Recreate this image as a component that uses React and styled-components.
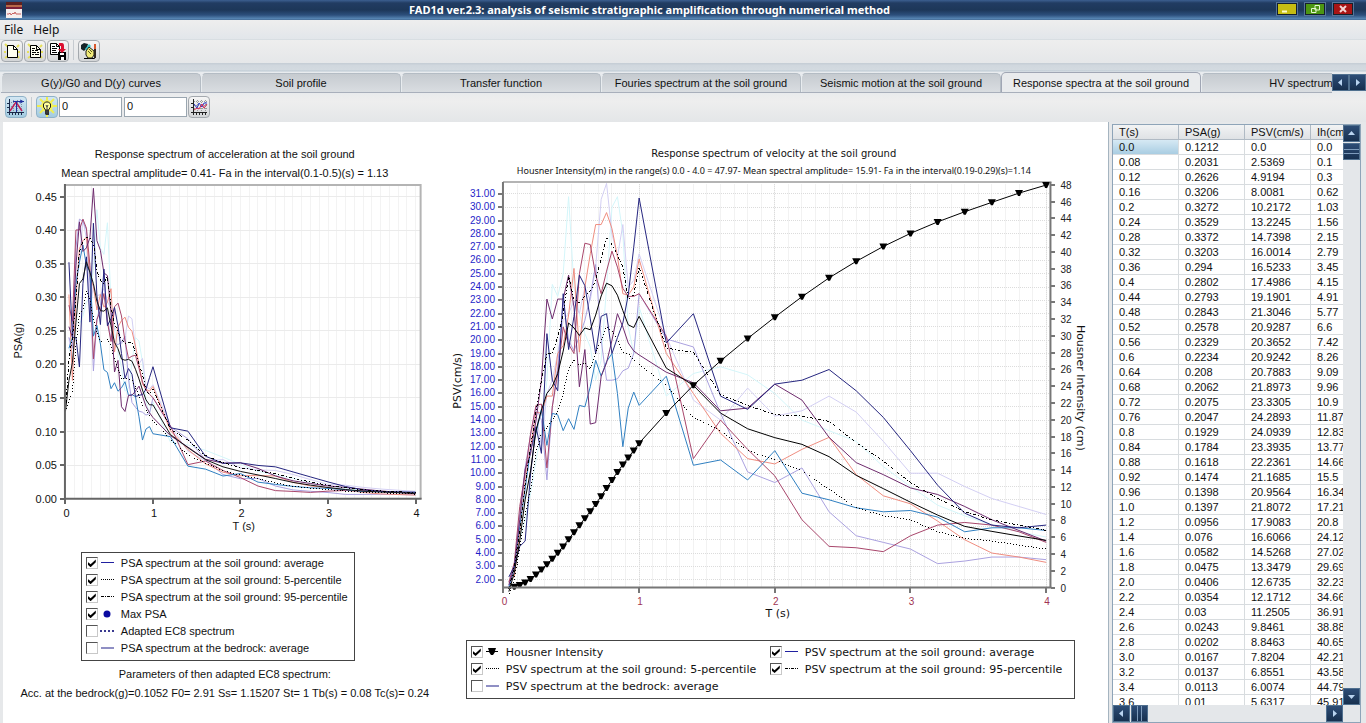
import styled, { createGlobalStyle } from "styled-components";

const sans = `"Liberation Sans", Arial, sans-serif`;
const wide = `"DejaVu Sans", Verdana, sans-serif`;
const humanist = `"Noto Sans", Tahoma, sans-serif`;

// T, PSA, PSV, Ih
const rows = [
  ["0.0", "0.1212", "0.0", "0.0"],
  ["0.08", "0.2031", "2.5369", "0.1"],
  ["0.12", "0.2626", "4.9194", "0.3"],
  ["0.16", "0.3206", "8.0081", "0.62"],
  ["0.2", "0.3272", "10.2172", "1.03"],
  ["0.24", "0.3529", "13.2245", "1.56"],
  ["0.28", "0.3372", "14.7398", "2.15"],
  ["0.32", "0.3203", "16.0014", "2.79"],
  ["0.36", "0.294", "16.5233", "3.45"],
  ["0.4", "0.2802", "17.4986", "4.15"],
  ["0.44", "0.2793", "19.1901", "4.91"],
  ["0.48", "0.2843", "21.3046", "5.77"],
  ["0.52", "0.2578", "20.9287", "6.6"],
  ["0.56", "0.2329", "20.3652", "7.42"],
  ["0.6", "0.2234", "20.9242", "8.26"],
  ["0.64", "0.208", "20.7883", "9.09"],
  ["0.68", "0.2062", "21.8973", "9.96"],
  ["0.72", "0.2075", "23.3305", "10.9"],
  ["0.76", "0.2047", "24.2893", "11.87"],
  ["0.8", "0.1929", "24.0939", "12.83"],
  ["0.84", "0.1784", "23.3935", "13.77"],
  ["0.88", "0.1618", "22.2361", "14.66"],
  ["0.92", "0.1474", "21.1685", "15.5"],
  ["0.96", "0.1398", "20.9564", "16.34"],
  ["1.0", "0.1397", "21.8072", "17.21"],
  ["1.2", "0.0956", "17.9083", "20.8"],
  ["1.4", "0.076", "16.6066", "24.12"],
  ["1.6", "0.0582", "14.5268", "27.02"],
  ["1.8", "0.0475", "13.3479", "29.69"],
  ["2.0", "0.0406", "12.6735", "32.23"],
  ["2.2", "0.0354", "12.1712", "34.66"],
  ["2.4", "0.03", "11.2505", "36.91"],
  ["2.6", "0.0243", "9.8461", "38.88"],
  ["2.8", "0.0202", "8.8463", "40.65"],
  ["3.0", "0.0167", "7.8204", "42.21"],
  ["3.2", "0.0137", "6.8551", "43.58"],
  ["3.4", "0.0113", "6.0074", "44.79"],
  ["3.6", "0.01", "5.6317", "45.91"],
  ["3.8", "0.0088", "5.2846", "47.01"],
  ["4.0", "0.0079", "4.9521", "47.97"],
];

// sampled periods: every 0.04 s up to 1 s, then every 0.2 s
const periods = [
  ...Array.from({ length: 25 }, (_, i) => (i + 1) * 0.04),
  ...Array.from({ length: 15 }, (_, i) => 1.2 + i * 0.2),
];

// PSV in cm/s for each period
const records = [
  {
    color: "#d4f6fa",
    psv: [1.4, 2.6, 5, 6.5, 8.5, 11, 13, 17, 24.2, 23.3, 25, 30.8, 24, 22, 20.5, 19.5, 17, 18.5, 24, 30, 30.8, 28, 21, 19, 22.5, 15.8, 17.5, 18, 17.4, 16, 14, 13.2, 12.4, 10.5, 9, 7.6, 6.8, 6.1, 5.6, 5.2],
  },
  {
    color: "#d3cff3",
    psv: [1.5, 2.4, 6, 9, 13, 14.5, 12, 16, 17, 19, 21.5, 22, 23, 22, 24, 23, 25.5, 30.6, 31.8, 28, 26.3, 28.7, 24, 24.5, 26.5, 20.3, 15.5, 14, 16.4, 14.3, 14.7, 15.8, 14.6, 12.4, 10, 10, 9, 8.1, 7.5, 6.9],
  },
  {
    color: "#aaa1df",
    psv: [1.5, 2.8, 7, 10.4, 12.9, 15, 14, 9.5, 15, 18, 23, 20, 19.2, 20.3, 21.5, 23.3, 25.7, 20, 17, 17, 17.1, 17.7, 17.9, 19, 23.5, 20.1, 19.5, 14.5, 10.1, 9.3, 10.4, 7.1, 5.3, 4.8, 4.3, 3.2, 3.4, 3.7, 3.7, 3.5],
  },
  {
    color: "#ef8d80",
    psv: [1.9, 2.2, 5.6, 9.3, 12, 14.6, 14.5, 15.8, 15.8, 19, 19.6, 21.9, 25.4, 19.1, 24, 26.5, 28.7, 28.7, 29.6, 28.4, 26.3, 23.5, 23.4, 24, 26.1, 19, 16, 13, 11.1, 10.7, 11.8, 12.7, 9.9, 8.3, 7.7, 6.4, 5, 4, 3.7, 3.3],
  },
  {
    color: "#a8456a",
    psv: [1.8, 3.3, 7.5, 10, 13, 15.1, 15.2, 10.4, 15, 17.5, 21, 19.7, 19, 25, 27.3, 27.2, 24.9, 23.5, 25.2, 26.7, 25.5, 23.9, 23.3, 23.3, 23.5, 20.3, 11.1, 14, 11.8, 9.8, 6.5, 4.5, 4.4, 4.1, 5.3, 6.1, 6.3, 6.1, 5.6, 4.8],
  },
  {
    color: "#2f7fc1",
    psv: [1.4, 3, 6, 8.8, 11.8, 13, 14.8, 12.1, 14.5, 14.4, 13.2, 14.1, 13.3, 15.1, 15, 16.5, 18.5, 17.3, 18.4, 19, 16, 12, 14.9, 16.1, 15.1, 17.3, 10.6, 11, 9.5, 11.7, 8.5, 8, 7.4, 7.1, 7.2, 6.7, 5.6, 5.9, 5.9, 5.7],
  },
  {
    color: "#6d2a6c",
    psv: [1.6, 3, 6.5, 10.3, 11.5, 14, 17, 23.1, 21.6, 23.1, 23.1, 24.9, 22.5, 16.5, 19.3, 13.7, 13.8, 17.3, 18.3, 20, 22, 21, 19.8, 19.2, 18.9, 17.6, 16.8, 14.7, 14.9, 16.7, 15.5, 12.7, 10.8, 9.9, 8.9, 8.4, 7.5, 6.5, 5.7, 4.9],
  },
  {
    color: "#25257f",
    psv: [2.2, 3, 4.5, 4.9, 10, 13.5, 11.5, 20.5, 17, 16.2, 23.5, 19.3, 21.8, 24.9, 24.1, 21.6, 19, 21.8, 22, 19, 20.2, 21.3, 23.4, 27, 30.7, 19.8, 22, 15.8, 14.8, 16.7, 17, 17.8, 16.2, 14.2, 11.7, 9.1, 7, 6.1, 5.9, 6.1],
  },
];

const average = [1.1, ...rows.slice(1).map((row) => Number(row[2]))];
const upper = [1.3, 3, 5.6, 9.2, 12, 14.6, 17, 19, 19, 20.3, 22, 24.8, 23.1, 22.8, 23.3, 23.7, 24.5, 26.1, 27.7, 27.2, 26.4, 25.5, 23.1, 23.4, 25.5, 19.4, 19.1, 15.9, 15.1, 14.4, 14.3, 13.9, 12.3, 10.9, 9.3, 8.1, 7.1, 6.5, 6.1, 5.7];
const lower = [0.9, 2, 4.3, 6.9, 8.8, 11.6, 13, 13.4, 14, 14.6, 16, 17.9, 18.5, 18.1, 18.3, 17.8, 19, 20, 21, 20.7, 20, 19.1, 19, 18.5, 18.2, 16.6, 14.2, 13.2, 11.7, 11, 10.2, 8.8, 7.4, 6.8, 6.5, 5.6, 5.1, 4.9, 4.6, 4.3];

const range = (from, to, step) =>
  Array.from({ length: Math.round((to - from) / step) + 1 }, (_, i) => from + i * step);

const psa = {
  x: (t) => 65.5 + t * 87.6,
  y: (v) => 499 - v * 672,
};
const psv = {
  x: (t) => 503.5 + t * 135.8,
  y: (v) => 580 - (v - 2) * 13.31,
  ih: (v) => 588 - v * 8.4,
};

const toPsa = (v, t) => (v * 2 * Math.PI) / (t * 981);
const psaPoints = (values) =>
  values.map((v, i) => `${psa.x(periods[i]).toFixed(1)},${psa.y(toPsa(v, periods[i])).toFixed(1)}`).join(" ");
const psaFromZero = (values) => `${psa.x(0)},${psa.y(0.13)} ${psaPoints(values)}`;
const psvPoints = (values) =>
  values.map((v, i) => `${psv.x(periods[i]).toFixed(1)},${psv.y(v).toFixed(1)}`).join(" ");

const AccelerationChart = () => (
  <Plot viewBox="3 183 444 351" role="img" aria-label="PSA spectrum chart">
    <g stroke="#f3f3f3" shapeRendering="crispEdges">
      {range(0.1, 4, 0.1).map((t) => (
        <line key={t} x1={psa.x(t)} x2={psa.x(t)} y1="186" y2="498" />
      ))}
    </g>
    <g stroke="#ebebeb" shapeRendering="crispEdges">
      {range(0.05, 0.45, 0.05).map((v) => (
        <line key={v} x1="67" x2="420" y1={psa.y(v)} y2={psa.y(v)} />
      ))}
    </g>
    <path d="M65 185H421V499" stroke="#b4b4b4" strokeWidth="2" fill="none" />
    <g fill="none">
      {records.map((r) => (
        <polyline key={r.color} points={psaPoints(r.psv)} stroke={r.color} />
      ))}
      <polyline points={psaFromZero(average)} stroke="#111" />
      <g stroke="#000" shapeRendering="crispEdges">
        <polyline points={psaFromZero(lower)} strokeDasharray="1 2" />
        <polyline points={psaFromZero(upper)} strokeDasharray="3 2 1 2" />
      </g>
    </g>
    <path d="M65 184V499H422" stroke="#666" strokeWidth="2" fill="none" />
    <g stroke="#666" strokeWidth="2" shapeRendering="crispEdges">
      {range(0, 0.45, 0.05).map((v) => (
        <line key={v} x1="60" x2="65" y1={psa.y(v)} y2={psa.y(v)} />
      ))}
      {range(0, 4, 1).map((t) => (
        <line key={t} x1={psa.x(t)} x2={psa.x(t)} y1="499" y2="504" />
      ))}
    </g>
    {range(0, 0.45, 0.05).map((v) => (
      <Tick key={v} x="57" y={psa.y(v) + 4} textAnchor="end">{v.toFixed(2)}</Tick>
    ))}
    {range(0, 4, 1).map((t) => (
      <Tick key={t} x={psa.x(t) + 1} y="517" textAnchor="middle">{t}</Tick>
    ))}
    <Tick x="244" y="530" textAnchor="middle">T (s)</Tick>
    <Tick textAnchor="middle" transform="translate(22 341) rotate(-90)">PSA(g)</Tick>
  </Plot>
);

const VelocityChart = () => {
  const intensity = rows.slice(1).map((row) => [psv.x(Number(row[0])), psv.ih(Number(row[3]))]);
  return (
    <Plot viewBox="447 180 662 440" role="img" aria-label="PSV spectrum and Housner intensity chart">
      <g stroke="#f2f2f2" shapeRendering="crispEdges">
        {range(0.1, 4, 0.1).map((t) => (
          <line key={t} x1={psv.x(t)} x2={psv.x(t)} y1="184" y2="587" />
        ))}
      </g>
      <g stroke="#dcdcdc" strokeDasharray="1 1" shapeRendering="crispEdges">
        {range(2, 31, 1).map((v) => (
          <line key={v} x1="505" x2="1050" y1={psv.y(v)} y2={psv.y(v)} />
        ))}
        {[1, 2, 3, 4].map((t) => (
          <line key={t} x1={psv.x(t)} x2={psv.x(t)} y1="184" y2="587" />
        ))}
      </g>
      <path d="M503 182H1052" stroke="#b4b4b4" strokeWidth="2" fill="none" />
      <g fill="none">
        {records.map((r) => (
          <polyline key={r.color} points={psvPoints(r.psv)} stroke={r.color} />
        ))}
        <g stroke="#000">
          <polyline points={psvPoints(average)} />
          <polyline points={intensity.map((p) => p.join(",")).join(" ")} />
        </g>
        <g stroke="#000" shapeRendering="crispEdges">
          <polyline points={psvPoints(lower)} strokeDasharray="1 2" />
          <polyline points={psvPoints(upper)} strokeDasharray="3 2 1 2" />
        </g>
      </g>
      {intensity.map(([x, y]) => (
        <path key={x} d={`M${x - 4} ${y - 3}h8l-3 6h-2z`} />
      ))}
      <path d="M503 182V588H1052" stroke="#777" strokeWidth="2" fill="none" />
      <path d="M1051 182V588" stroke="#777" strokeWidth="2" />
      <g stroke="#777" strokeWidth="2" shapeRendering="crispEdges">
        {range(2, 31, 1).map((v) => (
          <line key={v} x1="498" x2="503" y1={psv.y(v)} y2={psv.y(v)} />
        ))}
        {range(0, 48, 2).map((v) => (
          <line key={v} x1="1052" x2="1056" y1={psv.ih(v)} y2={psv.ih(v)} />
        ))}
        {range(0, 4, 1).map((t) => (
          <line key={t} x1={psv.x(t)} x2={psv.x(t)} y1="588" y2="593" />
        ))}
      </g>
      {range(2, 31, 1).map((v) => (
        <SmallTick key={v} x="495" y={psv.y(v) + 3} textAnchor="end" $color="#1e1ec8">{v.toFixed(2)}</SmallTick>
      ))}
      {range(0, 48, 2).map((v) => (
        <SmallTick key={v} x="1061" y={psv.ih(v) + 4}>{v}</SmallTick>
      ))}
      {range(0, 4, 1).map((t) => (
        <SmallTick key={t} x={psv.x(t) + 1} y="605" textAnchor="middle" $color="#a03352">{t}</SmallTick>
      ))}
      <AxisTitle x="778" y="617" textAnchor="middle">T (s)</AxisTitle>
      <AxisTitle textAnchor="middle" transform="translate(461 381) rotate(-90)">PSV(cm/s)</AxisTitle>
      <AxisTitle textAnchor="middle" transform="translate(1078 388) rotate(90)">Housner Intensity (cm)</AxisTitle>
    </Plot>
  );
};

const samples = {
  line: <path d="M1 5.500H14" stroke="#2020a0" />,
  dotted: <path d="M1 5.500H14" stroke="#000" strokeDasharray="1 1" />,
  dashed: <path d="M1 5.500H14" stroke="#000" strokeDasharray="3 1 1 1" />,
  point: <circle cx="7" cy="6" r="3.500" fill="#0b0ba0" />,
  ec8: <path d="M0 6H14" stroke="#3a3a90" strokeWidth="2" strokeDasharray="2 2" />,
  bedrock: <path d="M1 6H14" stroke="#8f8fc4" strokeWidth="2" />,
  marker: <path d="M1 5H4L3 2H11L10 5H13V6H10L8 9H6L4 6H1Z" />,
};

const LegendItem = ({ id, label, sample, checked }) => (
  <Entry htmlFor={id}>
    <Check type="checkbox" id={id} defaultChecked={checked} />
    <svg width="15" height="12" fill="none" aria-hidden="true">
      <g fill={sample === "marker" ? "#000" : undefined}>{samples[sample]}</g>
    </svg>
    <span>{label}</span>
  </Entry>
);

const psaLegend = [
  ["PSA spectrum at the soil ground: average", "line", true],
  ["PSA spectrum at the soil ground: 5-percentile", "dotted", true],
  ["PSA spectrum at the soil ground: 95-percentile", "dashed", true],
  ["Max PSA", "point", true],
  ["Adapted EC8 spectrum", "ec8", false],
  ["PSA spectrum at the bedrock: average", "bedrock", false],
];

const psvLegend = [
  ["Housner Intensity", "marker", true],
  ["PSV spectrum at the soil ground: average", "line", true],
  ["PSV spectrum at the soil ground: 5-percentile", "dotted", true],
  ["PSV spectrum at the soil ground: 95-percentile", "dashed", true],
  ["PSV spectrum at the bedrock: average", "bedrock", false],
];

const tabs = [
  "G(y)/G0 and D(y) curves",
  "Soil profile",
  "Transfer function",
  "Fouries spectrum at the soil ground",
  "Seismic motion at the soil ground",
  "Response spectra at the soil ground",
  "HV spectrum",
];

const PageIcon = ({ lines }) => (
  <svg width="18" height="18" aria-hidden="true">
    <path d="M2 2l3 3M16 3l-2 2M1 10h2M15 10h2M2 16l3-2M16 16l-2-2" stroke="#e6e05a" strokeWidth="2" />
    <path d="M4.500 3.500H10.500L14.500 7.500V15.500H4.500Z" fill="#fffff0" stroke="#000" />
    <path d="M10.500 3.500V7.500H14.500" fill="none" stroke="#000" />
    {lines && <path d="M6 6.500h3M6 8.500h2M9 8.500h3M6 10.500h4M11 10.500h2M6 12.500h2M9 12.500h4" stroke="#000" />}
  </svg>
);

const SaveIcon = () => (
  <svg width="18" height="18" aria-hidden="true">
    <path d="M1.500 1.500H7.500L10.500 4.500V12.500H1.500Z" fill="#fff" stroke="#000" />
    <path d="M7.500 1.500V4.500H10.500M3 4.500h3M3 6.500h5M3 8.500h4M3 10.500h5" fill="none" stroke="#000" />
    <path d="M9 10H17V18H9Z" fill="#000" />
    <path d="M11 11h4v2h-4zM12 15h3v3h-3z" fill="#fff" />
    <path d="M10 1h3q2 0 2 3v3h2l-4 4-4-4h3V4h-2z" fill="#dc1030" />
  </svg>
);

const DrawIcon = () => (
  <svg width="18" height="18" aria-hidden="true">
    <path d="M4 16.500H14.500V2" fill="none" stroke="#000" />
    <path d="M1 3l3-2 4 1-1 4-3 3-3-2z" fill="#142428" />
    <path d="M5 7l4-5 2 2-4 5z" fill="#38c8cc" />
    <path d="M6 9l3-4 5 4v4l-2 3H8L6 13z" fill="#f1ea78" stroke="#202020" />
    <path d="M8 9l3 3M9 7l3 3" stroke="#555520" />
    <path d="M15 2v5" stroke="#d8582c" strokeWidth="2" />
    <path d="M15 7v9" stroke="#302820" strokeWidth="2" />
  </svg>
);

const PeakIcon = () => (
  <svg width="18" height="18" aria-hidden="true">
    <path d="M2 4.500H16M2 8.500H16M6.500 2V14M10.500 2V14M14.500 2V14" stroke="#8095a5" strokeDasharray="1 1" />
    <path d="M2.500 1V17M0 14.500H17M5.500 14v3M8.500 14v3M11.500 14v3M14.500 14v3M0 5.500h2M0 9.500h2" stroke="#182848" />
    <path d="M3 13L9 4l6 9" fill="none" stroke="#c02058" strokeWidth="1.500" />
    <path d="M9.500 14V3M6 3.500h11M13 2l3 1.500L13 5" fill="none" stroke="#2030a0" />
  </svg>
);

const BulbIcon = () => (
  <svg width="20" height="20" aria-hidden="true">
    <path d="M10 0V20M0 9H20M3 2l14 14M17 2L3 16" stroke="#f0ee50" strokeWidth="2" />
    <circle cx="10" cy="9" r="6" fill="#f5f25a" />
    <path d="M8.500 13L6.500 10V7L8.500 5H11.500L13.500 7V10L11.500 13Z" fill="#ffff9c" stroke="#222" />
    <path d="M8 13h4v5H9l-1-1z" fill="#333" />
    <path d="M9 8l1 2 1-2M10 10v3M9 15h2" fill="none" stroke="#444" />
  </svg>
);

const CurvesIcon = () => (
  <svg width="18" height="18" aria-hidden="true">
    <path d="M4 3.500H17M4 7.500H17M4 10.500H17M7.500 2V14M11.500 2V14M15.500 2V14" stroke="#999" strokeDasharray="1 1" />
    <path d="M3.500 1V17M1 14.500H17M6.500 14v3M9.500 14v3M12.500 14v3M15.500 14v3M1 5.500h2M1 9.500h2" stroke="#222" />
    <path d="M4 6l3 4 2-5 3 4 2-4h3" fill="none" stroke="#2a3cc8" />
    <path d="M4 12l3-2 2 1 3-5 2 4 3-4" fill="none" stroke="#d82850" />
  </svg>
);

const arrowPaths = {
  left: "M7 2L3 5.500L7 9Z",
  right: "M4 2L8 5.500L4 9Z",
  up: "M2 7L5.500 3L9 7Z",
  down: "M2 4L5.500 8L9 4Z",
};

const Arrow = ({ to }) => (
  <svg width="11" height="11" aria-hidden="true">
    <path d={arrowPaths[to]} fill="#b9d4f0" />
  </svg>
);

const App = () => (
  <Window>
    <GlobalStyle />
    <TitleBar>
      <svg width="16" height="16" aria-hidden="true">
        <path d="M0 0H16V3H0Z" fill="#5d2020" />
        <path d="M0 3H16V6H0Z" fill="#b86848" />
        <path d="M0 5H16V8H0Z" fill="#7d1f38" />
        <path d="M0 7H16V16H0Z" fill="#f6eeee" />
        <path d="M1 12h2l1-1 1 2 2-2 1 1 1-2 1 2h5" fill="none" stroke="#c86060" />
      </svg>
      <Title>FAD1d ver.2.3: analysis of seismic stratigraphic amplification through numerical method</Title>
      <WindowButtons>
        <WindowButton $color="#c6bd12" aria-label="Minimize">
          <svg width="18" height="10"><path d="M4 7.500H9" stroke="#fffbd0" strokeWidth="2" /></svg>
        </WindowButton>
        <WindowButton $color="#4c9612" aria-label="Restore">
          <svg width="18" height="10"><path d="M9 1.500H13.500V6H9ZM5.500 4.500H10V8.500H5.500Z" fill="none" stroke="#e4f4d0" /></svg>
        </WindowButton>
        <WindowButton $color="#a81414" aria-label="Close">
          <svg width="18" height="10"><path d="M6 2L12 8M12 2L6 8" stroke="#f4d4d4" strokeWidth="2" /></svg>
        </WindowButton>
      </WindowButtons>
    </TitleBar>
    <MenuBar>
      <MenuItem>File</MenuItem>
      <MenuItem>Help</MenuItem>
    </MenuBar>
    <Toolbar>
      <IconButton aria-label="New"><PageIcon /></IconButton>
      <IconButton aria-label="Open"><PageIcon lines /></IconButton>
      <IconButton aria-label="Save"><SaveIcon /></IconButton>
      <Divider />
      <IconButton aria-label="Draw"><DrawIcon /></IconButton>
    </Toolbar>
    <TabStrip>
      <TabList role="tablist">
        {tabs.map((tab, i) => (
          <Tab key={tab} role="tab" aria-selected={i === 5} $active={i === 5}>{tab}</Tab>
        ))}
      </TabList>
      <ArrowButton aria-label="Previous tab"><Arrow to="left" /></ArrowButton>
      <ArrowButton aria-label="Next tab"><Arrow to="right" /></ArrowButton>
    </TabStrip>
    <ChartToolbar>
      <IconButton aria-label="Peak" $on><PeakIcon /></IconButton>
      <Divider />
      <IconButton aria-label="Highlight" $on><BulbIcon /></IconButton>
      <NumberBox aria-label="From" defaultValue="0" />
      <NumberBox aria-label="To" defaultValue="0" />
      <IconButton aria-label="Curves"><CurvesIcon /></IconButton>
    </ChartToolbar>
    <Content>
      <Charts>
        <LeftPanel>
          <Heading>Response spectrum of acceleration at the soil ground</Heading>
          <Subtitle>Mean spectral amplitude= 0.41- Fa in the interval(0.1-0.5)(s) = 1.13</Subtitle>
          <AccelerationChart />
          <PsaLegend>
            {psaLegend.map(([label, sample, checked], i) => (
              <LegendItem key={label} id={`psa-${i}`} label={label} sample={sample} checked={checked} />
            ))}
          </PsaLegend>
          <Note>Parameters of then adapted EC8 spectrum:</Note>
          <Note>Acc. at the bedrock(g)=0.1052 F0= 2.91 Ss= 1.15207 St= 1 Tb(s) = 0.08 Tc(s)= 0.24</Note>
        </LeftPanel>
        <RightPanel>
          <WideHeading>Response spectrum of velocity at the soil ground</WideHeading>
          <SmallSubtitle>
            Housner Intensity(m) in the range(s) 0.0 - 4.0 = 47.97- Mean spectral amplitude= 15.91- Fa in the interval(0.19-0.29)(s)=1.14
          </SmallSubtitle>
          <VelocityChart />
          <PsvLegend>
            {psvLegend.map(([label, sample, checked], i) => (
              <LegendItem key={label} id={`psv-${i}`} label={label} sample={sample} checked={checked} />
            ))}
          </PsvLegend>
        </RightPanel>
      </Charts>
      <Grid>
        <TableView>
          <Table>
            <thead>
              <tr>
                <th>T(s)</th>
                <th>PSA(g)</th>
                <th>PSV(cm/s)</th>
                <th>Ih(cm)</th>
              </tr>
            </thead>
            <tbody>
              {rows.map((row, i) => (
                <tr key={row[0]}>
                  {row.map((value, j) => (
                    <Cell key={j} $selected={i === 0 && j === 0}>{value}</Cell>
                  ))}
                </tr>
              ))}
            </tbody>
          </Table>
        </TableView>
        <VerticalScroll>
          <ArrowButton aria-label="Scroll up"><Arrow to="up" /></ArrowButton>
          <Thumb />
          <ArrowButton aria-label="Scroll down"><Arrow to="down" /></ArrowButton>
        </VerticalScroll>
        <HorizontalScroll>
          <ArrowButton aria-label="Scroll left"><Arrow to="left" /></ArrowButton>
          <Thumb $horizontal />
          <ArrowButton aria-label="Scroll right"><Arrow to="right" /></ArrowButton>
        </HorizontalScroll>
      </Grid>
    </Content>
  </Window>
);

const GlobalStyle = createGlobalStyle`
  * {
    box-sizing: border-box;
  }
  body {
    margin: 0;
    font-family: ${sans};
    font-size: 11px;
    color: #111;
    background: #e6e8ea;
  }
  button, input {
    font: inherit;
    color: inherit;
    padding: 0;
    margin: 0;
  }
  svg {
    display: block;
  }
`;

const Window = styled.div`
  display: flex;
  flex-direction: column;
  height: 100vh;
  overflow: hidden;
`;

const TitleBar = styled.header`
  display: flex;
  align-items: center;
  flex: none;
  height: 20px;
  padding: 0 13px 0 6px;
  background: linear-gradient(#3c5f90, #213c62 15%, #1d3759 50%, #2c4f7c 75%, #5a8ab8 95%, #3c5f88);
`;

const Title = styled.h1`
  flex: 1;
  margin: 0;
  text-align: center;
  font-family: ${humanist};
  font-size: 11px;
  font-weight: bold;
  line-height: 20px;
  color: #fff;
`;

const WindowButtons = styled.div`
  display: flex;
  gap: 8px;
  padding-bottom: 3px;
`;

const WindowButton = styled.button`
  width: 20px;
  height: 12px;
  border: 1px solid #14202c;
  outline: 1px solid #56759a;
  background: ${({ $color }) => $color};
`;

const MenuBar = styled.nav`
  display: flex;
  flex: none;
  gap: 10px;
  height: 20px;
  padding-left: 4px;
  background: linear-gradient(#eeeeee, #e2e6ea);
  border-bottom: 1px solid #d8dee2;
`;

const MenuItem = styled.button`
  border: 0;
  background: none;
  font-family: ${humanist};
  font-size: 12px;
  line-height: 18px;
`;

const Toolbar = styled.div`
  display: flex;
  flex: none;
  align-items: flex-start;
  gap: 1px;
  height: 23px;
  padding-left: 1px;
  background: linear-gradient(#eeeeee, #e5e7e9);
`;

const IconButton = styled.button`
  display: grid;
  place-items: center;
  flex: none;
  width: 22px;
  height: 22px;
  border: 1px solid ${({ $on }) => ($on ? "#8fb2c8" : "#a4a9ae")};
  border-radius: 4px;
  background: ${({ $on }) => ($on ? "linear-gradient(#d3e7f3, #a3cbe0)" : "linear-gradient(#f6f6f6, #d3d5d7)")};
`;

const Divider = styled.span`
  width: 1px;
  height: 20px;
  margin: 0 3px;
  background: #c6cbd0;
`;

const TabStrip = styled.div`
  display: flex;
  align-items: center;
  flex: none;
  height: 30px;
  padding: 9px 0 0 1px;
  background: linear-gradient(#c6ced6 1px, #d0d7de 2px, #d3dae0 7px, #bcc9d3 8px, #e9ecef 9px, #e6e9ec);
`;

const TabList = styled.div`
  display: flex;
  align-items: flex-end;
  align-self: stretch;
  flex: 1;
  min-width: 0;
  overflow: hidden;
  border-bottom: 1px solid #a8afbb;
`;

const Tab = styled.button`
  flex: 0 0 200px;
  height: ${({ $active }) => ($active ? 21 : 19)}px;
  border: 1px solid ${({ $active }) => ($active ? "#a0a6b4" : "#b4bcc4")};
  border-bottom: 0;
  border-left-color: ${({ $active }) => ($active ? "#a0a6b4" : "#e8ecef")};
  border-radius: 5px 5px 0 0;
  margin-bottom: ${({ $active }) => ($active ? -1 : 0)}px;
  background: ${({ $active }) => ($active ? "#e9ebed" : "linear-gradient(#c6cbd0, #d9dde1)")};
`;

const ArrowButton = styled.button`
  display: grid;
  place-items: center;
  flex: none;
  width: 17px;
  height: 17px;
  border: 1px solid #50708f;
  background: linear-gradient(#2d4d76, #17304f);
`;

const ChartToolbar = styled.div`
  display: flex;
  flex: none;
  align-items: center;
  height: 29px;
  padding: 0 0 1px 5px;
  background: linear-gradient(#e9ebed, #eeeeee 30%, #e4e6e8);

  ${Divider} {
    margin: 0 4px;
  }
`;

const NumberBox = styled.input`
  width: 63px;
  height: 20px;
  margin: 0 1px;
  padding: 0 2px 2px;
  border: 1px solid #9aa6b0;
  background: #fff;
`;

const Content = styled.main`
  display: flex;
  flex: 1;
  gap: 3px;
  min-height: 0;
  padding: 0 5px 0 3px;
`;

const Charts = styled.section`
  display: grid;
  grid-template-columns: minmax(0, 444fr) minmax(0, 662fr);
  flex: 1;
  min-width: 0;
  overflow: hidden;
  background: #fff;
  border-right: 1px solid #a5b4c0;
`;

const LeftPanel = styled.article`
  display: flex;
  flex-direction: column;
  align-items: center;
  padding-top: 23px;
`;

const RightPanel = styled(LeftPanel)`
  font-family: ${wide};
`;

const Heading = styled.h2`
  margin: 0;
  font-size: 11px;
  font-weight: normal;
  line-height: 19px;
`;

const WideHeading = styled(Heading)`
  font-size: 10px;
  line-height: 17px;
  margin-right: 7px;
`;

const Subtitle = styled.p`
  margin: 0;
  font-size: 11px;
  line-height: 19px;
`;

const SmallSubtitle = styled(Subtitle)`
  margin-right: 7px;
  font-family: ${humanist};
  font-size: 9px;
  line-height: 18px;
  white-space: nowrap;
`;

const Plot = styled.svg`
  width: 100%;
  height: auto;
`;

const Tick = styled.text`
  font-family: ${sans};
  font-size: 11px;
  fill: #111;
`;

const SmallTick = styled(Tick)`
  font-size: 10px;
  fill: ${({ $color }) => $color || "#222"};
`;

const AxisTitle = styled(Tick)`
  font-family: ${wide};
  font-size: 11px;
`;

const PsaLegend = styled.fieldset`
  margin: 18px 14px 4px 0;
  padding: 2px 4px 3px;
  min-width: 274px;
  border: 1px solid #444;
`;

const PsvLegend = styled(PsaLegend)`
  display: grid;
  grid-template-columns: 299px auto;
  min-width: 609px;
  margin-top: 20px;
  padding: 3px 4px;
`;

const Entry = styled.label`
  display: flex;
  align-items: center;
  height: 17px;
  white-space: nowrap;

  svg {
    margin: 0 6px 0 2px;
  }
`;

const Check = styled.input`
  appearance: none;
  display: grid;
  place-content: center;
  width: 12px;
  height: 12px;
  border: 1px solid #c8c8c8;
  border-top-color: #555;
  border-left-color: #555;
  background: #fff;

  &:checked::before {
    content: "";
    width: 8px;
    height: 8px;
    background: #000;
    clip-path: polygon(0 35%, 35% 65%, 100% 5%, 100% 40%, 35% 100%, 0 70%);
  }
`;

const Note = styled.p`
  margin: 0;
  line-height: 19px;
  white-space: nowrap;
`;

const Grid = styled.aside`
  display: grid;
  grid-template-columns: minmax(0, 1fr) 17px;
  grid-template-rows: minmax(0, 1fr) 17px;
  flex: none;
  width: 249px;
  margin: 2px 0 0;
  border: 1px solid #8ea4b8;
  background: #e4e7ea;
`;

const TableView = styled.div`
  overflow: hidden;
  background: #fff;
`;

const Table = styled.table`
  table-layout: fixed;
  width: 264px;
  border-collapse: separate;
  border-spacing: 0;

  th {
    height: 15px;
    padding: 0 0 0 6px;
    text-align: left;
    font-weight: normal;
    line-height: 14px;
    background: linear-gradient(#f2f3f4, #dfe2e5);
    border-right: 1px solid #b0bac4;
    border-bottom: 1px solid #b0bac4;
  }
`;

const Cell = styled.td`
  height: 15px;
  padding: 0 0 0 6px;
  line-height: 14px;
  border-right: 1px solid #d8dcdf;
  border-bottom: 1px solid #d8dcdf;
  background: ${({ $selected }) => ($selected ? "linear-gradient(#d6e9f4, #a9cde2)" : "#fff")};
`;

const VerticalScroll = styled.div`
  display: flex;
  flex-direction: column;
  gap: 1px;

  button:last-child {
    margin-top: auto;
  }
`;

const HorizontalScroll = styled.div`
  display: flex;
  gap: 1px;

  button:last-child {
    margin-left: auto;
  }
`;

const Thumb = styled.div`
  width: 17px;
  height: 17px;
  border: 1px solid #50708f;
  background:
    linear-gradient(${({ $horizontal }) => ($horizontal ? "90deg" : "180deg")},
      transparent 5px, #7e9cbc 5px, #7e9cbc 6px, transparent 6px, transparent 9px, #7e9cbc 9px, #7e9cbc 10px, transparent 10px),
    linear-gradient(#2d4d76, #17304f);
`;

export default App;
